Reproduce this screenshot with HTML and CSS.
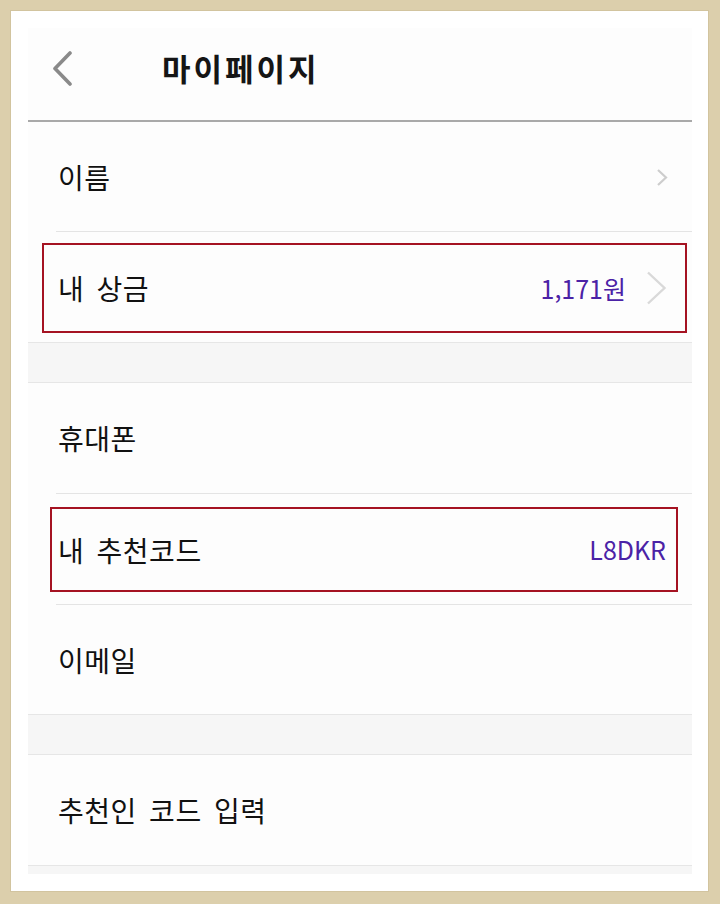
FILE: index.html
```html
<!DOCTYPE html>
<html lang="ko">
<head>
    <meta charset="utf-8">
    <title>마이페이지</title>
    <link rel="stylesheet" href="styles.css">
</head>
<body>
    <div class="sheet">
        <div class="panel">
            <div class="header">
                <svg class="back" width="21" height="35" viewBox="0 0 21 35">
                    <path d="M18 2 L3 17.5 L18 33" fill="none" stroke="#8a8a8a" stroke-width="3.6" stroke-linecap="round" stroke-linejoin="round"/>
                </svg>
                <h1 class="title">마이페이지</h1>
            </div>

            <div class="row">
                <span class="label">이름</span>
                <svg class="chev-sm" width="12" height="19" viewBox="0 0 12 19">
                    <path d="M2 2 L10 9.5 L2 17" fill="none" stroke="#cdcdcd" stroke-width="2.2"/>
                </svg>
            </div>
            <div class="divider"></div>

            <div class="row boxed prize">
                <div class="mark">
                    <span class="label">내 상금</span>
                    <span class="value">1,171원</span>
                    <svg class="chev-lg" width="21" height="34" viewBox="0 0 21 34">
                        <path d="M2 1.5 L18.5 17 L2 32.5" fill="none" stroke="#d9d9d9" stroke-width="2.4"/>
                    </svg>
                </div>
            </div>

            <div class="gap"></div>

            <div class="row tall">
                <span class="label">휴대폰</span>
            </div>
            <div class="divider"></div>

            <div class="row boxed code">
                <div class="mark">
                    <span class="label">내 추천코드</span>
                    <span class="value code-value">L8DKR</span>
                </div>
            </div>
            <div class="divider"></div>

            <div class="row">
                <span class="label">이메일</span>
            </div>

            <div class="gap"></div>

            <div class="row tall">
                <span class="label">추천인 코드 입력</span>
            </div>
            <div class="gap last"></div>
        </div>
    </div>
</body>
</html>
```

FILE: styles.css
```css
html, body {
    margin: 0;
    height: 100%;
}

body {
    background: #dccfac;
    padding: 10px 11px 12px 10px;
    box-sizing: border-box;
    font-family: "Noto Sans CJK KR", "Noto Sans", sans-serif;
    color: #111;
}

/* white photo frame */
.sheet {
    background: #fff;
    height: 882px;
    padding: 18px 17px 0 18px;
    box-sizing: border-box;
    box-shadow: inset 0 0 0 1px #d2c49f;
}

.panel {
    background: #fdfdfd;
}

/* top bar */
.header {
    height: 94px;
    border-bottom: 2px solid #a9a9a9;
    display: flex;
    align-items: center;
    padding: 0 0 14px 24px;
    box-sizing: border-box;
}

.back {
    display: block;
    margin-top: 2px;
}

.title {
    margin: 0 0 0 89px;
    font-size: 31px;
    font-weight: 700;
    letter-spacing: 3px;
    color: #151515;
    line-height: 1;
}

/* list rows */
.row {
    height: 109px;
    display: flex;
    align-items: center;
    padding: 0 24px 0 30px;
}

.row.tall {
    height: 110px;
}

.label {
    font-size: 28px;
    word-spacing: 4px;
    letter-spacing: 0.5px;
    flex: 1;
    line-height: 1;
}

.value {
    font-size: 25px;
    color: #4b22a6;
    line-height: 1;
}

.chev-sm {
    display: block;
    margin-top: 2px;
}

.divider {
    height: 1px;
    background: #e4e4e4;
    margin-left: 28px;
}

.gap {
    height: 39px;
    background: #f6f6f6;
    border-top: 1px solid #e6e6e6;
    border-bottom: 1px solid #e6e6e6;
}

.gap.last {
    height: 8px;
    border-bottom: none;
}

/* red annotation boxes */
.boxed {
    padding: 0;
    height: 110px;
    display: block;
}

.mark {
    border: 2px solid #a51322;
    box-sizing: border-box;
    display: flex;
    align-items: center;
    height: 100%;
}

.prize {
    padding: 11px 5px 9px 14px;
    box-sizing: border-box;
}

.prize .mark {
    padding: 0 18px 0 14px;
}

.prize .value {
    margin-right: 20px;
}

.code {
    padding: 13px 14px 12px 22px;
    box-sizing: border-box;
}

.code .mark {
    padding: 0 10px 0 6px;
}

.code-value {
    font-size: 25px;
}
```
